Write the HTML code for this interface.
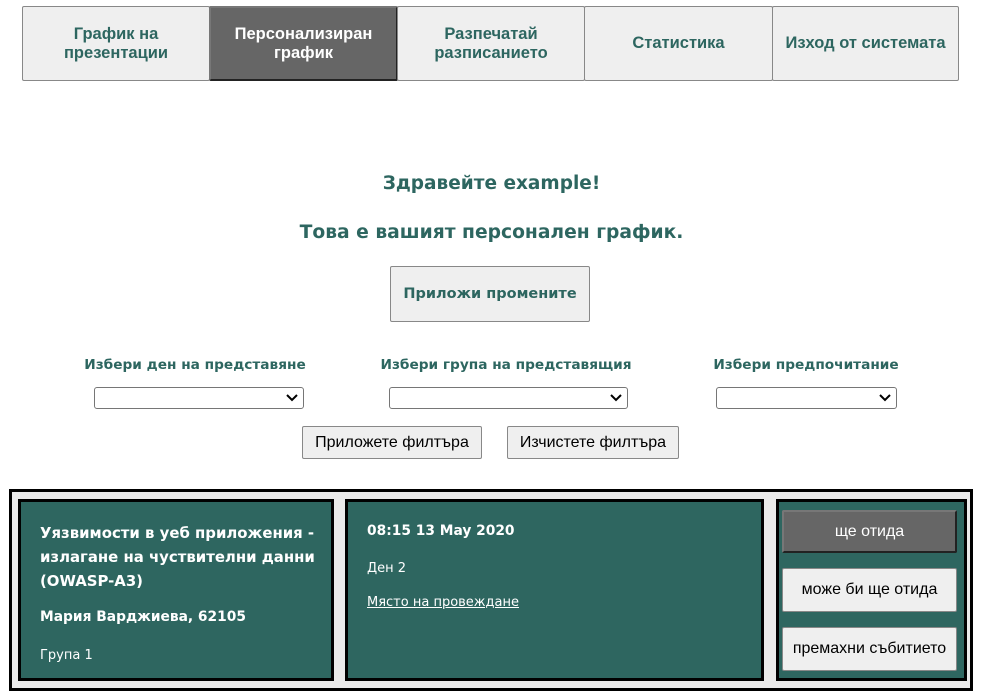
<!DOCTYPE html>
<html><head><meta charset="utf-8"><style>
*{box-sizing:border-box;margin:0;padding:0}
body{width:983px;height:697px;background:#fff;font-family:"Liberation Sans",sans-serif;position:relative;overflow:hidden}
.nav{position:absolute;top:6px;height:75px;border:1px solid #888;background:#efefef;color:#2d6660;font-weight:bold;font-size:16.5px;display:flex;align-items:center;justify-content:center;text-align:center;line-height:19px;border-radius:2px}
.nav.act{background:#666;color:#fff;border:2px solid;border-color:#777 #222 #222 #777}
.t{position:absolute;left:0;width:983px;text-align:center;color:#2d6660;font-weight:bold;font-family:"DejaVu Sans","Liberation Sans",sans-serif}
.btn{position:absolute;background:#efefef;border:1px solid #888;border-radius:2px;display:flex;align-items:center;justify-content:center;font-size:16px;color:#000;white-space:nowrap;font-family:"Liberation Sans",sans-serif}
.lbl{position:absolute;top:357px;color:#2d6660;font-weight:bold;font-size:13.7px;font-family:"DejaVu Sans",sans-serif;text-align:center;white-space:nowrap}
.sel{position:absolute;top:387px;height:22px;border:1px solid #767676;border-radius:3px;background:#fff}
.sel svg{position:absolute;right:5px;top:6px}
.card{position:absolute;top:499px;height:182px;border:3px solid #000;background:#2e6660;color:#fff;font-family:"DejaVu Sans",sans-serif}
.p{position:absolute;white-space:nowrap}
</style></head><body>
<div class="nav" style="left:22px;width:188px">График на<br>презентации</div>
<div class="nav act" style="left:209px;width:189px">Персонализиран<br>график</div>
<div class="nav" style="left:397px;width:188px">Разпечатай<br>разписанието</div>
<div class="nav" style="left:584px;width:189px">Статистика</div>
<div class="nav" style="left:772px;width:187px">Изход от системата</div>

<div class="t" style="top:173px;font-size:18.5px">Здравейте example!</div>
<div class="t" style="top:222px;font-size:18.7px">Това е вашият персонален график.</div>
<div class="btn" style="left:390px;top:266px;width:200px;height:56px;color:#2d6660;font-weight:bold;font-size:14.5px;font-family:'DejaVu Sans',sans-serif">Приложи промените</div>

<div class="lbl" style="left:80px;width:230px">Избери ден на представяне</div>
<div class="lbl" style="left:372px;width:268px">Избери група на представящия</div>
<div class="lbl" style="left:700px;width:212px">Избери предпочитание</div>
<div class="sel" style="left:94px;width:210px"><svg width="12" height="8"><path d="M1 1l5 5 5-5" stroke="#000" stroke-width="2" fill="none"/></svg></div>
<div class="sel" style="left:389px;width:239px"><svg width="12" height="8"><path d="M1 1l5 5 5-5" stroke="#000" stroke-width="2" fill="none"/></svg></div>
<div class="sel" style="left:716px;width:181px"><svg width="12" height="8"><path d="M1 1l5 5 5-5" stroke="#000" stroke-width="2" fill="none"/></svg></div>

<div class="btn" style="left:302px;top:426px;width:180px;height:33px">Приложете филтъра</div>
<div class="btn" style="left:507px;top:426px;width:172px;height:33px">Изчистете филтъра</div>

<div style="position:absolute;left:9px;top:489px;width:964px;height:202px;border:3px solid #000;background:#eaeaea"></div>
<div class="card" style="left:18px;width:316px">
<div class="p" style="left:19px;top:19px;font-weight:bold;font-size:14.9px;line-height:24px">Уязвимости в уеб приложения -<br>излагане на чуствителни данни<br>(OWASP-A3)</div>
<div class="p" style="left:19px;top:107px;font-weight:bold;font-size:13.8px">Мария Варджиева, 62105</div>
<div class="p" style="left:19px;top:146px;font-size:13px">Група 1</div>
</div>
<div class="card" style="left:345px;width:419px">
<div class="p" style="left:19px;top:21px;font-weight:bold;font-size:13.8px">08:15 13 May 2020</div>
<div class="p" style="left:19px;top:59px;font-size:13px">Ден 2</div>
<div class="p" style="left:19px;top:93px;font-size:13px;text-decoration:underline">Място на провеждане</div>
</div>
<div class="card" style="left:776px;width:191px">
<div class="btn" style="left:3px;top:8px;width:175px;height:43px;background:#666;color:#fff;border:2px solid;border-color:#777 #222 #222 #777">ще отида</div>
<div class="btn" style="left:3px;top:66px;width:175px;height:44px">може би ще отида</div>
<div class="btn" style="left:3px;top:125px;width:175px;height:44px">премахни събитието</div>
</div>
</body></html>
